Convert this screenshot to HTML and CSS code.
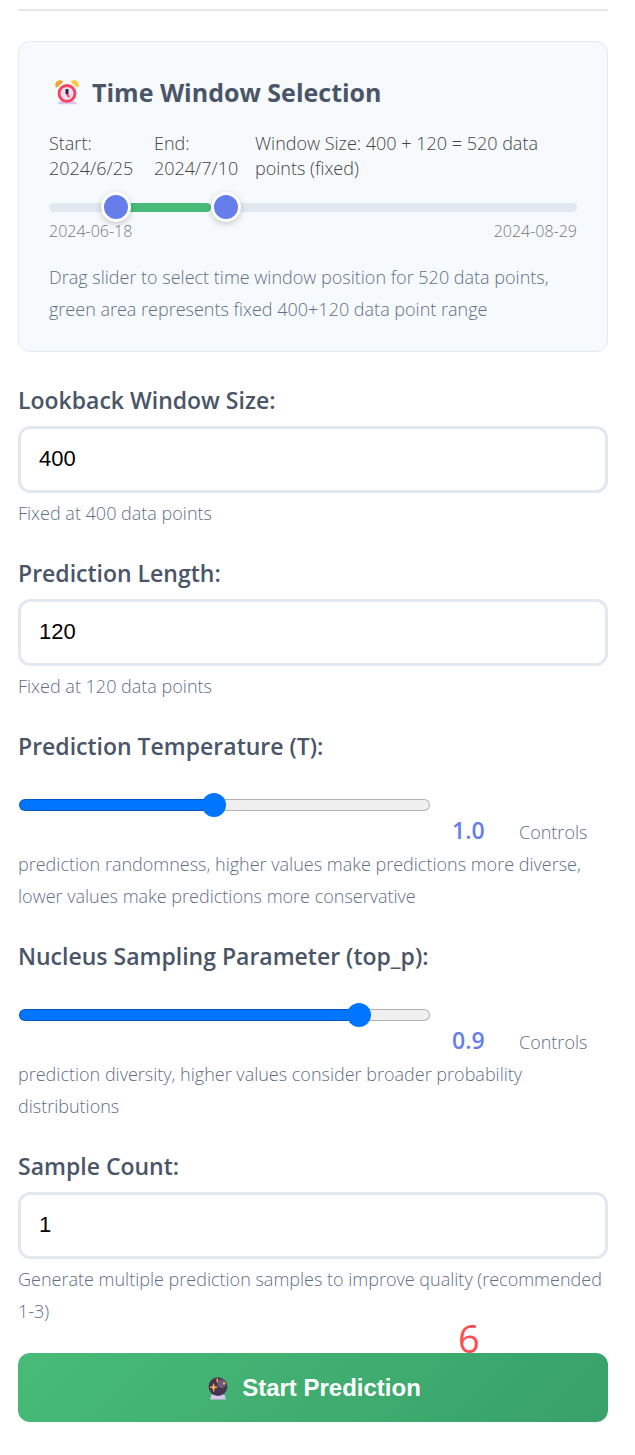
FILE: index.html
```
<!DOCTYPE html>
<html lang="en">
<head>
<meta charset="UTF-8">
<meta name="viewport" content="width=device-width, initial-scale=1.0">
<title>Prediction Settings</title>
<link rel="stylesheet" href="styles.css">
</head>
<body>
<form class="settings">
    <div class="time-window">
        <h2>
            <svg class="icon" viewBox="0 0 36 36" aria-hidden="true">
                <path d="M5 35c0-3 3-5 6-5h13c4 0 7 2 8 5z" fill="#d9c4ee"/>
                <path d="M2 10c-1-5 3-9 8-8 2 0 3 1 2 3l-7 6c-1 1-3 1-3-1z" fill="#f2a62f"/>
                <path d="M34 10c1-5-3-9-8-8-2 0-3 1-2 3l7 6c1 1 3 1 3-1z" fill="#ffc83d"/>
                <circle cx="18" cy="20" r="11" fill="#eadff2" stroke="#f8405f" stroke-width="4"/>
                <path d="M18 14v7" stroke="#321b41" stroke-width="4"/>
                <path d="M18 21l3 4" stroke="#f8405f" stroke-width="3"/>
            </svg>
            Time Window Selection
        </h2>
        <div class="window-info">
            <span>Start: <span id="start-date">2024/6/25</span></span>
            <span>End: <span id="end-date">2024/7/10</span></span>
            <span>Window Size: 400 + 120 = 520 data points (fixed)</span>
        </div>
        <div class="window-slider">
            <div class="track"><div class="selected" style="margin-left: 9.9%; width: 20.8%;"></div></div>
            <input type="range" class="handle" aria-label="Window start" min="0" max="72" step="0.1" value="7.5">
            <input type="range" class="handle" aria-label="Window end" min="0" max="72" step="0.1" value="23.4">
        </div>
        <div class="slider-labels">
            <span>2024-06-18</span>
            <span>2024-08-29</span>
        </div>
        <p class="help">Drag slider to select time window position for 520 data points, green area represents fixed 400+120 data point range</p>
    </div>

    <div class="form-group">
        <label for="lookback">Lookback Window Size:</label>
        <input type="text" class="field" id="lookback" value="400" readonly>
        <p class="help">Fixed at 400 data points</p>
    </div>

    <div class="form-group">
        <label for="pred-len">Prediction Length:</label>
        <input type="text" class="field" id="pred-len" value="120" readonly>
        <p class="help">Fixed at 120 data points</p>
    </div>

    <div class="form-group">
        <label for="temperature">Prediction Temperature (T):</label>
        <div class="help">
            <input type="range" class="range" id="temperature" min="0.1" max="2" step="0.1" value="1" style="--fill: 47.5%;"><output class="value" for="temperature">1.0</output>Controls prediction randomness, higher values make predictions more diverse, lower values make predictions more conservative
        </div>
    </div>

    <div class="form-group">
        <label for="top-p">Nucleus Sampling Parameter (top_p):</label>
        <div class="help">
            <input type="range" class="range" id="top-p" min="0" max="1" step="0.05" value="0.85" style="--fill: 83%;"><output class="value" for="top-p">0.9</output>Controls prediction diversity, higher values consider broader probability distributions
        </div>
    </div>

    <div class="form-group">
        <label for="samples">Sample Count:</label>
        <input type="text" class="field" id="samples" value="1">
        <p class="help">Generate multiple prediction samples to improve quality (recommended 1-3)</p>
    </div>

    <div class="actions">
        <span class="step-mark">6</span>
        <button type="button" class="btn">
            <svg class="icon" viewBox="0 0 36 36" aria-hidden="true">
                <path d="M9 27h18l2 7H7z" fill="#d9c4ee"/>
                <circle cx="18" cy="16" r="13" fill="#45354f"/>
                <circle cx="23" cy="12" r="6" fill="#6c5b78"/>
                <path d="M12 12l1 4 4 1-4 1-1 5-1-5-4-1 4-1z" fill="#ffb04e" stroke="#ffb04e"/>
                <path d="M16 5h2v5h-2zM25 10h3v3h-3z" fill="#ffb04e"/>
            </svg>
            Start Prediction
        </button>
    </div>
</form>

<script>
document.querySelectorAll('.range').forEach(range => {
    range.addEventListener('input', () => {
        const percent = (range.value - range.min) / (range.max - range.min) * 100;
        range.style.setProperty('--fill', percent + '%');
        range.nextElementSibling.textContent = Number(range.value).toFixed(1);
    });
});
</script>
</body>
</html>
```
FILE: styles.css
```
* {
    box-sizing: border-box;
}

body {
    font-family: "Open Sans", "Noto Sans", sans-serif;
    background-color: #fff;
    color: #4a5568;
    margin: 0;
    padding: 9px 27px 33px 18px;
}

.settings {
    border-top: 2px solid #e2e8f0;
    padding-top: 30px;
}

.icon {
    width: 26px;
    height: 26px;
    flex: none;
}

/* Time window card */
.time-window {
    margin-bottom: 32px;
    padding: 30px 30px 26px;
    background-color: #f7fafc;
    border: 1px solid #e2e8f0;
    border-radius: 12px;
}

.time-window h2 {
    display: flex;
    align-items: center;
    gap: 12px;
    margin: 0 0 19px;
    padding-left: 5px;
    font-size: 25px;
    font-weight: 700;
    line-height: 40px;
}

.window-info {
    display: grid;
    grid-template-columns: 105px 101px 1fr;
    font-size: 18px;
    font-weight: 300;
    line-height: 25px;
    color: #444;
}

.window-slider {
    display: grid;
    align-items: center;
    height: 30px;
    margin-top: 11px;
}

.track,
.handle {
    grid-area: 1 / 1;
}

.track {
    height: 9px;
    background-color: #e2e8f0;
    border-radius: 5px;
}

.selected {
    height: 100%;
    background-color: #48bb78;
    border-radius: 5px;
}

.handle {
    appearance: none;
    width: 100%;
    height: 30px;
    margin: 0;
    background: none;
    pointer-events: none;
}

.handle::-webkit-slider-thumb {
    appearance: none;
    width: 30px;
    height: 30px;
    background-color: #667eea;
    border: 3px solid #fff;
    border-radius: 50%;
    box-shadow: 0 2px 6px rgba(0, 0, 0, 0.2);
    pointer-events: auto;
    cursor: pointer;
}

.slider-labels {
    display: flex;
    justify-content: space-between;
    margin-bottom: 21px;
    font-size: 16px;
    font-weight: 300;
    line-height: 18px;
    color: #777;
}

/* Form fields */
.form-group {
    margin-bottom: 28px;
}

label {
    display: block;
    margin-bottom: 10px;
    font-size: 23px;
    font-weight: 600;
    line-height: 32px;
}

.field {
    display: block;
    width: 100%;
    height: 67px;
    margin-bottom: 4px;
    padding: 0 18px 2px;
    font-family: "Liberation Sans", Arial, sans-serif;
    font-size: 22px;
    color: #000;
    background-color: #fff;
    border: 3px solid #e2e8f0;
    border-radius: 12px;
}

.help {
    margin: 0;
    font-size: 18px;
    font-weight: 300;
    line-height: 32px;
    color: #5f6f88;
}

/* Raised above the text line that holds the value */
.range {
    appearance: none;
    width: calc(70% - 2px);
    height: 24px;
    margin: 21px 1px 0;
    vertical-align: 22px;
    background: none;
}

.range::-webkit-slider-runnable-track {
    height: 12px;
    background: linear-gradient(to right, #0075ff var(--fill), #efefef var(--fill)) border-box;
    border: 1px solid rgba(0, 0, 0, 0.25);
    border-radius: 6px;
}

.range::-webkit-slider-thumb {
    appearance: none;
    width: 24px;
    height: 24px;
    margin-top: -7px;
    background-color: #0075ff;
    border-radius: 50%;
}

.value {
    display: inline-block;
    width: 88px;
    padding-left: 21px;
    font-size: 23px;
    font-weight: 600;
    color: #667eea;
}

/* Submit button */
.actions {
    position: relative;
    margin-top: -2px;
}

.step-mark {
    position: absolute;
    left: 440px;
    bottom: 100%;
    font-size: 38px;
    line-height: 30px;
    color: #ff4d4f;
}

.btn {
    display: flex;
    align-items: center;
    justify-content: center;
    gap: 11px;
    width: 100%;
    height: 69px;
    font-family: "Liberation Sans", Arial, sans-serif;
    font-size: 24px;
    font-weight: 700;
    color: #fff;
    background: linear-gradient(135deg, #48bb78, #38a169);
    border: none;
    border-radius: 12px;
    cursor: pointer;
}
```
